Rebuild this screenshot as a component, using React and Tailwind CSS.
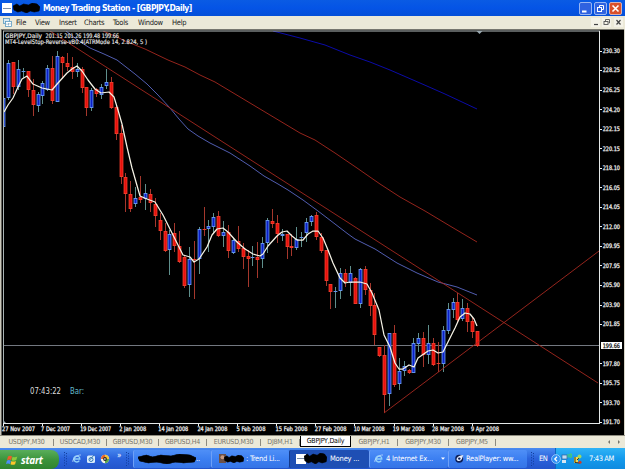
// [side, bodyTop, bodyBottom, high, low] - u = bullish, d = bearish
const CANDLES = [
  ['u', 98, 127, 94, 131], ['u', 63, 98, 60, 100], ['d', 62, 87, 62, 94], ['u', 69, 87, 60, 90],
  ['u', 71, 72, 68, 78], ['d', 71, 90, 71, 97], ['d', 90, 105, 79, 116], ['u', 94, 106, 92, 112],
  ['u', 83, 96, 81, 104], ['u', 68, 90, 65, 91], ['d', 68, 101, 56, 104], ['u', 56, 102, 51, 102],
  ['d', 57, 63, 56, 79], ['d', 63, 67, 53, 71], ['d', 67, 72, 57, 79], ['u', 69, 72, 63, 77],
  ['d', 69, 88, 67, 93], ['d', 87, 108, 87, 116], ['u', 90, 108, 88, 111], ['d', 89, 94, 88, 97],
  ['u', 87, 95, 84, 99], ['u', 82, 86, 69, 89], ['d', 82, 108, 77, 109], ['d', 107, 134, 105, 140],
  ['d', 133, 177, 125, 184], ['d', 177, 194, 173, 212], ['d', 194, 209, 181, 212], ['u', 198, 204, 187, 207],
  ['d', 197, 200, 176, 203], ['u', 193, 199, 184, 210], ['d', 194, 203, 189, 212], ['d', 204, 216, 198, 227],
  ['d', 220, 231, 213, 240], ['d', 231, 251, 223, 252], ['u', 234, 250, 230, 275], ['d', 233, 246, 223, 252],
  ['d', 246, 262, 231, 263], ['d', 257, 286, 255, 288], ['u', 259, 285, 247, 297], ['d', 259, 260, 241, 299],
  ['u', 229, 259, 227, 274], ['d', 229, 230, 207, 236], ['u', 226, 229, 220, 252], ['u', 217, 227, 213, 234],
  ['d', 216, 236, 211, 237], ['u', 232, 236, 221, 247], ['d', 232, 251, 225, 258], ['u', 240, 253, 238, 254],
  ['d', 241, 249, 226, 252], ['d', 248, 257, 243, 269], ['d', 256, 259, 250, 287], ['u', 257, 258, 246, 266],
  ['d', 257, 260, 242, 278], ['u', 243, 259, 237, 268], ['u', 220, 243, 218, 253], ['d', 221, 224, 209, 228],
  ['d', 223, 234, 215, 243], ['u', 234, 236, 229, 241], ['d', 234, 247, 234, 259], ['d', 246, 248, 234, 256],
  ['u', 239, 248, 227, 250], ['u', 237, 238, 232, 247], ['u', 222, 233, 218, 242], ['u', 216, 222, 215, 226],
  ['d', 215, 237, 212, 240], ['d', 237, 251, 233, 253], ['d', 250, 281, 250, 286], ['d', 284, 292, 284, 309],
  ['u', 291, 292, 287, 308], ['u', 273, 291, 268, 299], ['d', 273, 282, 269, 287], ['u', 273, 283, 266, 296],
  ['d', 278, 304, 277, 304], ['u', 269, 304, 268, 308], ['d', 269, 290, 266, 295], ['d', 290, 306, 283, 316],
  ['d', 305, 335, 293, 345], ['d', 347, 356, 347, 357], ['d', 355, 395, 345, 413], ['u', 333, 394, 333, 406],
  ['d', 333, 385, 325, 387], ['u', 371, 384, 358, 390], ['u', 366, 371, 361, 376], ['d', 370, 373, 369, 374],
  ['u', 343, 373, 338, 373], ['u', 338, 344, 333, 352], ['d', 338, 355, 332, 367], ['u', 343, 355, 325, 364],
  ['d', 343, 365, 338, 366], ['d', 363, 364, 342, 372], ['u', 330, 364, 326, 372], ['u', 309, 331, 303, 334],
  ['u', 302, 310, 298, 318], ['d', 302, 320, 293, 323], ['u', 308, 319, 299, 321], ['d', 308, 322, 303, 332],
  ['d', 321, 332, 317, 338], ['d', 331, 346, 331, 347],
];

const FAST_MA =
  '4,112 8,105 13,98 18,87 22,79 27,76 33,84 42,88 52,90 58,83 67,73 72,69 77,66 82,71 88,80 95,89 101,93 109,92 114,97 118,110 122,124 127,147 132,168 140,196 147,199 155,202 163,215 173,235 183,255 190,257 194,262 199,259 207,247 212,235 217,229 223,228 228,232 237,242 245,249 253,254 260,256 263,254 268,246 277,236 282,232 287,231 292,236 297,240 303,240 308,234 313,231 318,231 323,238 328,250 333,263 340,278 345,283 350,282 360,282 367,284 372,293 379,310 384,335 390,347 395,363 399,369 403,369 409,365 414,367 418,358 428,351 433,350 438,353 443,352 448,342 455,328 460,317 465,313 470,314 474,319 477,326';
const MID_MA =
  '66,31 75,38 82,43 90,48 104,54 117,60 126,67 135,74 147,84 158,95 170,108 179,119 188,129 198,136 210,143 230,153 250,166 264,176 278,184 288,190 303,200 318,211 335,224 348,234 355,239 375,249 397,263 417,273 438,282 457,287 477,295';
const SLOW_MA =
  '103,31 115,36 125,41 145,49 168,60 185,67 200,75 215,82 230,91 250,103 265,112 285,124 300,133 315,140 335,153 357,168 380,184 400,197 425,211 450,226 477,242';
const LONG_MA = '273,31 300,38 325,45 350,55 370,62 390,70 420,83 445,94 477,109';

const PRICES = [
  '230.30', '228.25', '226.25', '224.20', '222.15', '220.15', '218.10', '216.05', '214.05', '212.00',
  '209.95', '207.95', '205.90', '203.90', '201.85', null, '197.80', '195.75', '193.70', '191.70',
];

const DATES = [
  ['27 Nov 2007', 33], ['7 Dec 2007', 29], ['19 Dec 2007', 31], ['2 Jan 2008', 27], ['14 Jan 2008', 30],
  ['24 Jan 2008', 30], ['5 Feb 2008', 29], ['15 Feb 2008', 32], ['27 Feb 2008', 32], ['10 Mar 2008', 31],
  ['19 Mar 2008', 32], ['28 Mar 2008', 32], ['9 Apr 2008', 28],
];

const MENU = [
  ['File', 'w-[19px]'], ['View', 'w-[24px]'], ['Insert', 'w-[25px]'], ['Charts', 'w-[29px]'],
  ['Tools', 'w-[25px]'], ['Window', 'w-[34px]'], ['Help', 'w-[20px]'],
];

const TABS = [
  ['USDJPY,M30', 'w-[54px]'], ['USDCAD,M30', 'w-[53px]'], ['GBPUSD,M30', 'w-[52px]'], ['GBPUSD,H4', 'w-[48px]'],
  ['EURUSD,M30', 'w-[54px]'], ['DJ8M,H1', 'w-[39px]'], ['GBPJPY,Daily', 'w-[51px]'], ['GBPJPY,H1', 'w-[47px]'],
  ['GBPJPY,M30', 'w-[51px]'], ['GBPJPY,M5', 'w-[47px]'],
];

const Scribble = ({ className }) => (
  <svg viewBox="0 0 28 10" preserveAspectRatio="none" className={className}>
    <path
      d="M0 3 L4 1 L7 3 L11 1 L16 2 L20 0 L25 1 L28 4 L27 8 L22 9 L18 8 L14 10 L9 8 L5 9 L1 7 Z"
      fill="#000"
      stroke="#000"
      strokeWidth="0.6"
    />
  </svg>
);

function TitleBar() {
  return (
    <div className="flex h-4 shrink-0 items-center bg-linear-to-b from-[#0a5be4] via-[#0554e6] to-[#0450d8] pl-0.5 pr-[3px]">
      <div className="flex h-[10px] w-[10px] items-center bg-white">
        <div className="mx-px h-px w-2 bg-[#7d8ea8]" />
      </div>
      <Scribble className="ml-px h-2.5 w-[27px]" />
      <span className="ml-[3px] whitespace-nowrap font-['DejaVu_Sans_Condensed','DejaVu_Sans',sans-serif] text-[8.5px] font-bold leading-none tracking-[-0.5px] text-white">
        Money Trading Station - [GBPJPY,Daily]
      </span>
      <div className="ml-auto flex gap-[2px]">
        <svg className="h-[13px] w-[13px]" viewBox="0 0 13 13">
          <rect x="0.5" y="0.5" width="12" height="12" rx="1.5" fill="#2f62e0" stroke="#b9cdf7" strokeWidth="0.8" />
          <rect x="3" y="8.5" width="4.5" height="2" fill="#fff" />
        </svg>
        <svg className="h-[13px] w-[13px]" viewBox="0 0 13 13">
          <rect x="0.5" y="0.5" width="12" height="12" rx="1.5" fill="#2f62e0" stroke="#b9cdf7" strokeWidth="0.8" />
          <path d="M5.5 5V3.5H9.5V7.5H8" fill="none" stroke="#fff" />
          <rect x="3.5" y="5.5" width="4" height="4" fill="none" stroke="#fff" />
        </svg>
        <svg className="h-[13px] w-[13px]" viewBox="0 0 13 13">
          <rect x="0.5" y="0.5" width="12" height="12" rx="1.5" fill="#d9512c" stroke="#f0c6bb" strokeWidth="0.8" />
          <path d="M3.5 3.5L9.5 9.5M9.5 3.5L3.5 9.5" stroke="#fff" strokeWidth="1.6" />
        </svg>
      </div>
    </div>
  );
}

function MenuBar() {
  return (
    <div className="flex h-[13px] shrink-0 items-center bg-[#ece9d8] pl-[3px] text-[7.5px] leading-none tracking-[-0.3px] text-[#222]">
      <svg className="mr-1 h-[9px] w-[9px]" viewBox="0 0 9 9">
        <rect x="0.5" y="0.5" width="6" height="5" fill="#d7e8f3" stroke="#5a9bc0" strokeWidth="0.8" />
        <rect x="2.5" y="3.5" width="6" height="5" fill="#fff" stroke="#5a9bc0" strokeWidth="0.8" />
        <path d="M4 7V5.5M5.5 7.5V5M7 6.5V5" stroke="#4b83a8" strokeWidth="0.6" />
      </svg>
      {MENU.map(([label, width]) => (
        <span key={label} className={width}>{label}</span>
      ))}
      <svg className="ml-auto mr-[2px] h-[9px] w-[32px]" viewBox="0 0 32 9">
        <rect x="0" y="0" width="9" height="9" fill="#f4f2e8" />
        <rect x="11" y="0" width="9" height="9" fill="#f4f2e8" />
        <rect x="23" y="0" width="9" height="9" fill="#f4f2e8" />
        <path d="M3 6.5H7" stroke="#444" strokeWidth="1.2" />
        <path d="M14.5 3.5V1.5H18.5V5H17.5" fill="none" stroke="#555" strokeWidth="0.9" />
        <rect x="13" y="3.5" width="4" height="3" fill="none" stroke="#555" strokeWidth="0.9" />
        <path d="M25.5 2L29.5 6.5M29.5 2L25.5 6.5" stroke="#444" strokeWidth="1.2" />
      </svg>
    </div>
  );
}

function Candle({ index, data }) {
  const [side, top, bottom, high, low] = data;
  const x = Math.round(3.4 + index * 4.882);
  const up = side === 'u';
  const height = bottom - top;
  return (
    <g>
      <rect x={x} y={high} width="1" height={low - high} fill={up ? '#5f8f8c' : '#a5372c'} />
      <rect x={x - 1.4} y={top} width="3.8" height={height} fill={up ? '#6495ed' : '#ee3a2a'} />
      {height > 2 && (
        <rect x={x - 0.5} y={top + 1} width="2" height={height - 2} fill={up ? '#0a1ec8' : '#e8100c'} />
      )}
    </g>
  );
}

function Chart() {
  return (
    <svg
      viewBox="0 29 625 406"
      className="block h-[406px] w-[625px] shrink-0 bg-black font-['DejaVu_Sans_Condensed','DejaVu_Sans',sans-serif]"
    >
      {/* window edges */}
      <rect x="0" y="29" width="625" height="1" fill="#77766e" />
      <rect x="0" y="29" width="1" height="406" fill="#c9c7ba" />
      <rect x="1" y="30" width="1" height="405" fill="#66655e" />
      <rect x="624" y="29" width="1" height="406" fill="#d9d6c8" />

      <clipPath id="plot">
        <rect x="3" y="31" width="596" height="392" />
      </clipPath>
      <g clipPath="url(#plot)">
        <rect x="3" y="345" width="596" height="1" fill="#737880" />
        <polyline points={LONG_MA} fill="none" stroke="#0b0ba8" />
        <polyline points={SLOW_MA} fill="none" stroke="#a5281f" strokeWidth="0.9" />
        <polyline points={MID_MA} fill="none" stroke="#5a68c4" strokeWidth="0.9" />
        {CANDLES.map((c, i) => (
          <Candle key={i} index={i} data={c} />
        ))}
        <path d="M50 31L598 383M384 413L599 251" fill="none" stroke="#a5281f" strokeWidth="0.9" />
        <polyline points={FAST_MA} fill="none" stroke="#f6f3e6" strokeWidth="1.25" strokeLinejoin="round" />
      </g>

      {/* plot frame */}
      <rect x="3" y="30.5" width="597" height="1" fill="#b4bcbc" />
      <rect x="3" y="31" width="1" height="392" fill="#a9b3b3" />
      <rect x="599" y="31" width="1" height="393" fill="#e4e8e8" />
      <rect x="3" y="423" width="597" height="1" fill="#e4e8e8" />
      <path d="M476.5 31H482.5L479.5 34Z" fill="#9aa9b0" />
      <path d="M3 420L6 423H3Z" fill="#9aa9b0" />

      <g fill="#e8e8e8" stroke="#e8e8e8" strokeWidth="0.15" fontSize="6.2">
        <text x="5" y="37.7" textLength="37" lengthAdjust="spacingAndGlyphs">GBPJPY,Daily</text>
        <text x="45.5" y="37.7" textLength="73.5" lengthAdjust="spacingAndGlyphs">201.15 201.26 199.48 199.66</text>
        <text x="5" y="44" textLength="142" lengthAdjust="spacingAndGlyphs">
          MT4-LevelStop-Reverse-vB0.4(ATRMode 14, 2.824, 5 )
        </text>
      </g>

      <text x="30" y="393.8" fontSize="8" textLength="31" lengthAdjust="spacingAndGlyphs" fill="#dcdcdc">07:43:22</text>
      <text x="70" y="393.8" fontSize="8" textLength="14" lengthAdjust="spacingAndGlyphs" fill="#63bccb">Bar:</text>

      <g fill="#f2f2f2" fontSize="6.2">
        {PRICES.map((price, i) => {
          const y = 50.5 + i * 19.54;
          return price ? (
            <g key={price}>
              <rect x="600" y={Math.round(y)} width="2" height="1" />
              <text x="602.7" y={y + 2.4} textLength="17.3" lengthAdjust="spacingAndGlyphs" stroke="#f2f2f2" strokeWidth="0.25">{price}</text>
            </g>
          ) : null;
        })}
        {DATES.map(([date, width], i) => (
          <g key={date}>
            <rect x={Math.round(3 + i * 39.05)} y="424" width="1" height="2" />
            <text x={2 + i * 39.08} y="431.2" textLength={width} lengthAdjust="spacingAndGlyphs" stroke="#f2f2f2" strokeWidth="0.25">{date}</text>
          </g>
        ))}
      </g>
      <rect x="601" y="342" width="21" height="7" fill="#fff" />
      <text x="602.7" y="347.8" fontSize="6.2" textLength="17.3" lengthAdjust="spacingAndGlyphs" fill="#111" stroke="#111" strokeWidth="0.25">199.66</text>
    </svg>
  );
}

function ChartTabs() {
  return (
    <div className="flex h-[13px] shrink-0 border-t border-[#8f8d80] bg-[#ece9d8] text-[7px] leading-none tracking-[-0.22px] text-[#77756a]">
      {TABS.map(([label, width]) =>
        label === 'GBPJPY,Daily' ? (
          <div key={label} className={`${width} flex h-[11px] items-center justify-center border-x border-b border-black bg-white text-black`}>
            {label}
          </div>
        ) : (
          <div key={label} className={`${width} flex items-center justify-center whitespace-nowrap`}>
            <span className="flex-1 text-center">{label}</span>
            <span className="h-[7px] w-px bg-[#8d8b80]" />
          </div>
        )
      )}
      <svg className="ml-auto mr-1 h-3 w-[14px]" viewBox="0 0 14 12">
        <path d="M3 4V8L1 6ZM11 4V8L13 6Z" fill="#77756a" />
      </svg>
    </div>
  );
}

const Grip = ({ className }) => (
  <svg className={`h-[14px] w-1 shrink-0 ${className}`} viewBox="0 0 4 14">
    <path d="M0.5 0V14M2.5 1V14" stroke="#123d9c" strokeDasharray="1 1.6" />
  </svg>
);

const IeIcon = () => (
  <svg className="h-[9px] w-[10px] shrink-0" viewBox="0 0 10 9">
    <path d="M2 5H7.8A3 3 0 1 0 7.3 6.6" fill="none" stroke="#8fd0fa" strokeWidth="1.4" />
    <path d="M1 8C-0.5 6 5 0.5 9 1" fill="none" stroke="#cfe7ff" strokeWidth="0.7" />
  </svg>
);

function TaskButton({ width, active, children }) {
  return (
    <div
      className={`${width} flex h-[18px] items-center overflow-hidden whitespace-nowrap rounded-[2px] border-l pl-1 ${
        active
          ? 'border-[#12398d] bg-[#1e4fb4]'
          : 'border-[#6ea0f7] bg-linear-to-b from-[#4f8ff7] via-[#3c7ff1] to-[#3574e6]'
      }`}
    >
      {children}
    </div>
  );
}

function Taskbar() {
  return (
    <div className="flex h-[21px] shrink-0 items-center bg-linear-to-b from-[#4a8bf0] via-[#2a62dc] to-[#2355cc] text-[7.5px] leading-none tracking-[-0.1px] text-white">
      <div className="flex h-[19px] w-[59px] shrink-0 items-center self-end rounded-r-lg bg-linear-to-b from-[#5aae5a] via-[#3c943c] to-[#2f842f] pl-[6px]">
        <svg className="h-3 w-[12px]" viewBox="0 0 12 12">
          <path d="M2 2.5Q4 1 6 2.5L5 6Q3.5 4.8 1 6Z" fill="#ee5a2a" />
          <path d="M6.6 2.8Q9 4 11.3 2.6L10.3 6Q8 7.3 5.6 6.2Z" fill="#8ccc3c" />
          <path d="M0.9 6.7Q3 5.5 4.9 6.8L4 10Q2 8.8 0 10Z" fill="#4d8df5" />
          <path d="M5.4 7Q7.7 8.2 10 6.9L9.1 10.2Q7 11.4 4.5 10.3Z" fill="#fcc62c" />
        </svg>
        <span className="ml-[3px] font-['Open_Sans',sans-serif] text-[10px] font-bold italic leading-none tracking-[-0.3px]">start</span>
      </div>
      <Grip className="ml-[5px]" />
      <div className="ml-1 flex w-[56px] items-center">
        <IeIcon />
        <svg className="ml-1 h-[10px] w-[10px]" viewBox="0 0 10 10">
          <rect x="1" y="1.5" width="8" height="7.5" rx="1.5" fill="#d9ecfb" />
          <circle cx="5" cy="5.5" r="2" fill="none" stroke="#3478b4" />
          <path d="M4 5.8L8 1" stroke="#3478b4" />
        </svg>
        <svg className="ml-[4px] h-[10px] w-[10px]" viewBox="0 0 10 10">
          <circle cx="5" cy="5" r="4.2" fill="#f5f0e6" />
          <path d="M5 0.8A4.2 4.2 0 0 0 1 5L5 5Z" fill="#e8682c" />
          <path d="M5 0.8A4.2 4.2 0 0 1 9.2 5L5 5Z" fill="#f4c63c" />
          <path d="M9.2 5A4.2 4.2 0 0 1 5 9.2L5 5Z" fill="#5ca84c" />
          <circle cx="5" cy="5" r="1.9" fill="#222" />
          <path d="M4.4 4V6L6.2 5Z" fill="#fff" />
        </svg>
        <span className="-mt-1.5 ml-[7px] text-[8px]">»</span>
      </div>
      <Grip className="-ml-0.5" />
      <div className="ml-[3px] flex">
        <TaskButton width="w-[78px]">
          <Scribble className="h-2.5 w-[58px]" />
          <span>..</span>
        </TaskButton>
        <TaskButton width="w-[78px]">
          <svg className="ml-[3px] h-[9px] w-[7px]" viewBox="0 0 7 9">
            <rect width="7" height="9" fill="#6c5148" />
            <circle cx="3.5" cy="3.2" r="2" fill="#c79a80" />
          </svg>
          <Scribble className="-ml-0.5 h-2 w-[20px]" />
          <span className="ml-0.5 tracking-[-0.25px]">: Trend Li...</span>
        </TaskButton>
        <TaskButton width="w-[80px]" active>
          <div className="ml-[2px] flex h-[10px] w-[10px] shrink-0 items-center bg-white">
            <div className="mx-px h-px w-2 bg-[#7d8ea8]" />
          </div>
          <Scribble className="-ml-0.5 h-[11px] w-[23px] shrink-0" />
          <span className="ml-[3px] tracking-[-0.2px]">Money ...</span>
        </TaskButton>
        <TaskButton width="w-[79px]">
          <IeIcon />
          <span className="ml-[2px] tracking-[-0.2px]">4 Internet Ex...</span>
          <svg className="ml-auto mr-[3px] h-[3px] w-[4px] shrink-0" viewBox="0 0 4 3">
            <path d="M0 0.5H4L2 2.7Z" fill="#fff" />
          </svg>
        </TaskButton>
        <TaskButton width="w-[79px]">
          <svg className="ml-[2px] h-[9px] w-[9px] shrink-0" viewBox="0 0 9 9">
            <circle cx="4.2" cy="4.7" r="4" fill="#0d1f58" />
            <path d="M1.5 5.5C2 2 6 1 8.5 1.2C7 3 7.5 6.5 4 7C3 7 2 6.5 1.5 5.5Z" fill="#e6efff" />
            <circle cx="4.3" cy="4.6" r="1.2" fill="#0d1f58" />
          </svg>
          <span className="ml-[2px] tracking-[-0.25px]">RealPlayer: ww...</span>
        </TaskButton>
      </div>
      <Grip className="ml-[4px]" />
      <span className="ml-[4px] w-[16px] shrink-0 tracking-[-0.5px]">EN</span>
      <div className="relative flex h-full flex-1 items-center border-l border-[#0f64c0] bg-linear-to-b from-[#2fb3f6] via-[#149aec] to-[#0f8be0]">
        <svg className="absolute -left-[5px] h-[10px] w-[10px]" viewBox="0 0 10 10">
          <circle cx="5" cy="5" r="4.4" fill="#2f8ff2" stroke="#a8d6fb" strokeWidth="0.8" />
          <path d="M6 2.8L3.8 5L6 7.2" fill="none" stroke="#fff" strokeWidth="1.3" />
        </svg>
        <svg className="ml-[5px] h-[12px] w-[22px] shrink-0" viewBox="0 0 22 12">
          <rect x="1" y="2" width="5" height="4" fill="#bcdcf4" stroke="#345c9c" strokeWidth="0.7" />
          <rect x="1" y="7" width="4" height="3" fill="#d6e6f2" />
          <path d="M7 1V4.5M8.8 1H10.3V4.3H8.8Z" fill="none" stroke="#52dd4c" strokeWidth="0.8" />
          <rect x="13" y="4" width="4" height="6" fill="#f5d84a" />
          <path d="M14 4V9.5L19 10M16 7L20 3" fill="none" stroke="#3b301c" />
          <circle cx="18.5" cy="3.5" r="2" fill="#9ed864" />
          <circle cx="19" cy="9.3" r="1.5" fill="#d23a28" />
        </svg>
        <span className="ml-[6px] whitespace-nowrap tracking-[-0.4px]">7:43 AM</span>
      </div>
    </div>
  );
}

export default function App() {
  return (
    <div className="flex h-[469px] w-[625px] flex-col overflow-hidden bg-[#ece9d8] font-['DejaVu_Sans_Condensed','DejaVu_Sans',sans-serif]">
      <TitleBar />
      <MenuBar />
      <Chart />
      <ChartTabs />
      <Taskbar />
    </div>
  );
}
